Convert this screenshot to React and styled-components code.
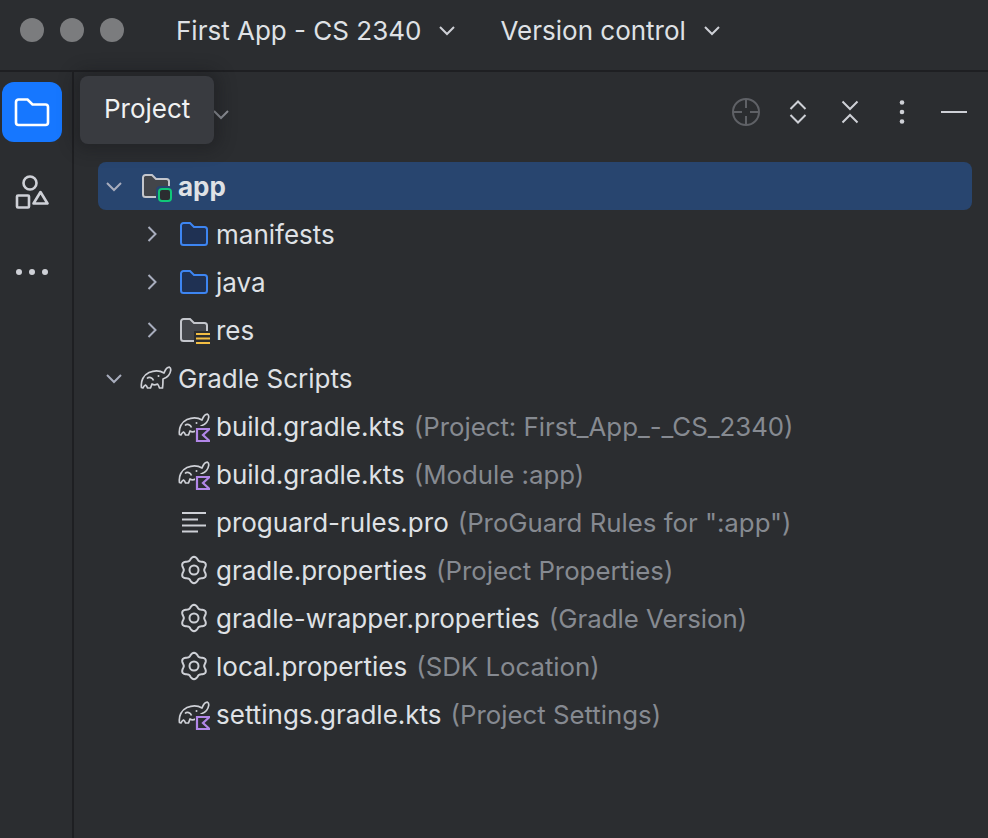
import React from 'react';
import styled, { createGlobalStyle } from 'styled-components';

const Global = createGlobalStyle`
  html, body { margin: 0; padding: 0; background: #2b2d30; }
  body { font-family: Inter, "Liberation Sans", sans-serif; }
`;

const Window = styled.div`
  width: 988px;
  height: 838px;
  display: flex;
  flex-direction: column;
  overflow: hidden;
  background: #2b2d30;
  color: #dfe1e5;
`;

const TitleBar = styled.header`
  height: 70px;
  flex: none;
  display: flex;
  align-items: center;
  padding: 0 0 10px 20px;
  box-sizing: border-box;
`;
const Lights = styled.div`
  display: flex;
  gap: 16px;
  margin-right: 52px;
`;
const Light = styled.span`
  width: 24px;
  height: 24px;
  border-radius: 50%;
  background: #7b7c7e;
`;
const Menu = styled.div`
  display: flex;
  align-items: center;
  gap: 15px;
  margin-right: 42px;
  font-size: 26px;
`;

const Body = styled.div`
  flex: 1;
  display: flex;
  border-top: 2px solid #1e1f22;
`;
const Strip = styled.nav`
  width: 74px;
  flex: none;
  display: flex;
  flex-direction: column;
  align-items: center;
  box-sizing: border-box;
  padding: 10px 8px 0 0;
  border-right: 2px solid #1e1f22;
`;
const StripButton = styled.div`
  width: 60px;
  height: 60px;
  margin-bottom: ${(p) => p.$gap}px;
  display: flex;
  align-items: center;
  justify-content: center;
  border-radius: 12px;
  background: ${(p) => (p.$active ? '#1677ff' : 'transparent')};
`;

const Panel = styled.main`
  flex: 1;
  position: relative;
  min-width: 0;
  padding: 0 16px 0 24px;
`;
const PanelHeader = styled.div`
  height: 90px;
  display: flex;
  align-items: center;
  padding-bottom: 10px;
  box-sizing: border-box;
`;
const HeaderChevron = styled.span`
  display: flex;
  margin-left: 112px;
  padding-top: 4px;
`;
const Tools = styled.div`
  margin-left: auto;
  display: flex;
  align-items: center;
  gap: 22px;
  padding-right: 3px;
`;
const Tool = styled.span`
  width: 30px;
  height: 30px;
  display: flex;
  align-items: center;
  justify-content: center;
`;
const Tooltip = styled.div`
  position: absolute;
  left: 6px;
  top: 4px;
  width: 134px;
  height: 68px;
  box-sizing: border-box;
  padding: 0 0 4px 24px;
  display: flex;
  align-items: center;
  font-size: 26px;
  color: #f0f1f2;
  background: #393b40;
  border-radius: 8px;
  box-shadow: 0 0 16px 6px rgba(20, 21, 23, 0.35);
`;

const Tree = styled.ul`
  list-style: none;
  margin: 0;
  padding: 0;
`;
const Row = styled.li`
  height: 48px;
  display: flex;
  align-items: center;
  padding-left: ${(p) => p.$indent}px;
  border-radius: 8px;
  font-size: 26px;
  white-space: pre;
  background: ${(p) => (p.$selected ? '#28456f' : 'transparent')};
`;
const Arrow = styled.span`
  width: 32px;
  height: 30px;
  flex: none;
  margin-right: 4px;
  display: flex;
  align-items: center;
  justify-content: center;
`;
const NodeIcon = styled.span`
  width: 32px;
  height: 32px;
  flex: none;
  margin: 0 6px;
  display: flex;
  align-items: center;
  justify-content: center;
`;
const Name = styled.span`
  font-weight: ${(p) => (p.$bold ? 700 : 400)};
  color: #dfe1e5;
`;
const Hint = styled.span`
  margin-left: 9px;
  font-size: 25.8px;
  color: #868a91;
`;

const Chevron = ({ dir = 'down', size = 22, color = '#a8adbd', w = 2 }) => {
  const d = dir === 'down' ? 'M4 8l7 7 7-7' : 'M7.5 4l7 7-7 7';
  return (
    <svg width={size} height={size} viewBox="0 0 22 22" fill="none" stroke={color} strokeWidth={w}>
      <path d={d} />
    </svg>
  );
};

const FolderNav = () => (
  <svg width="36" height="30" viewBox="0 0 36 30" fill="none" stroke="#fff" strokeWidth="2.6">
    <path d="M2 5a2.5 2.5 0 0 1 2.5-2.5h9l5 5h13A2.5 2.5 0 0 1 34 10v15.5a2.5 2.5 0 0 1-2.5 2.5h-27A2.5 2.5 0 0 1 2 25.5z" />
  </svg>
);

const Shapes = () => (
  <svg width="34" height="34" viewBox="0 0 34 34" fill="none" stroke="#ced0d6" strokeWidth="2.6">
    <circle cx="15" cy="8" r="6.5" />
    <rect x="2" y="20.5" width="12" height="12" rx="1" />
    <path d="M25.5 17l7 11.5h-14z" strokeLinejoin="round" />
  </svg>
);

const folderPath = 'M3 7.5A2.5 2.5 0 0 1 5.5 5H12l4 4h10.5A2.5 2.5 0 0 1 29 11.5v13a2.5 2.5 0 0 1-2.5 2.5h-21A2.5 2.5 0 0 1 3 24.5z';

const BlueFolder = () => (
  <svg width="32" height="32" viewBox="0 0 32 32" fill="#1f3153" stroke="#3d85f2" strokeWidth="2">
    <path d={folderPath} />
  </svg>
);

const GreyFolder = ({ children }) => (
  <svg width="32" height="32" viewBox="0 0 32 32" fill="#43454a">
    <path stroke="#c4c6cc" strokeWidth="2" d={folderPath} />
    {children}
  </svg>
);

const ModuleFolder = () => (
  <GreyFolder>
    <rect x="16" y="16" width="17" height="17" rx="4" fill="#28456f" />
    <rect x="19" y="19" width="12" height="12" rx="3" fill="#2b2d30" stroke="#10c878" strokeWidth="2" />
  </GreyFolder>
);

const ResFolder = () => (
  <GreyFolder>
    <rect x="16" y="17" width="17" height="15" fill="#2b2d30" />
    <path d="M18 20h14M18 24.5h14M18 29h14" stroke="#f2bd43" strokeWidth="2.2" />
  </GreyFolder>
);

const elephant =
  'M1.5 21.5C0.5 15 3.5 9 9 6.5C14 4.5 19 4 24 7C25 4.5 27 1 29.5 1.2C31.5 2 31 6.5 28.5 9.5C27 11.5 24.5 12.5 23 13C23 16 23 19 22.5 22H19.5C19 20.5 18.5 19 17.5 18C15.5 19 13.5 19 12 18L10.5 22H7.5C7 20.5 6.5 19.5 5.5 19C4.5 19.5 3.5 20.5 3 22z';

const Elephant = () => (
  <g fill="none" stroke="#ced0d6" strokeWidth="1.7" strokeLinejoin="round">
    <path d={elephant} />
    <path d="M7 12.5C9 10.500 12.500 11.500 13.500 14.500" />
    <circle cx="18.5" cy="10" r="1" fill="#ced0d6" stroke="none" />
  </g>
);

const Gradle = () => (
  <svg width="32" height="24" viewBox="0 0 32 24">
    <Elephant />
  </svg>
);

const GradleKotlin = () => (
  <svg width="32" height="32" viewBox="0 0 32 32" fill="none">
    <g transform="translate(0 3)">
      <Elephant />
    </g>
    <rect x="17" y="16" width="15" height="16" fill="#2b2d30" />
    <path d="M19 19H31.5L25 25L31.5 31H19z" stroke="#b287e8" strokeWidth="2.2" />
  </svg>
);

const Lines = () => (
  <svg width="26" height="22" viewBox="0 0 26 22" stroke="#ced0d6" strokeWidth="2">
    <path d="M1 2h24M1 8.5h16M1 14.5h24M1 20.5h16" />
  </svg>
);

// six rounded lobes around the centre, one pointing up
const gearPoints = Array.from({ length: 96 }, (_, i) => {
  const a = (i / 96) * Math.PI * 2;
  const r = 11.7 + 1.5 * Math.cos(6 * a);
  return `${(15 + r * Math.sin(a)).toFixed(2)},${(15 - r * Math.cos(a)).toFixed(2)}`;
}).join(' ');

const Gear = () => (
  <svg width="30" height="30" viewBox="0 0 30 30" fill="none" stroke="#ced0d6" strokeWidth="2">
    <circle cx="15" cy="15" r="4.5" />
    <polygon points={gearPoints} strokeLinejoin="round" />
  </svg>
);

const Locate = () => (
  <svg width="30" height="30" viewBox="0 0 30 30" fill="none" stroke="#5f6166" strokeWidth="2">
    <circle cx="15" cy="15" r="13" />
    <path d="M15 2v9M15 19v9M2 15h9M19 15h9" />
  </svg>
);
const Expand = () => (
  <svg width="18" height="24" viewBox="0 0 18 24" fill="none" stroke="#ced0d6" strokeWidth="2">
    <path d="M1.5 9L9 1.5 16.5 9M1.5 15L9 22.5 16.5 15" />
  </svg>
);
const Collapse = () => (
  <svg width="18" height="24" viewBox="0 0 18 24" fill="none" stroke="#ced0d6" strokeWidth="2">
    <path d="M1.5 1.5L9 9l7.5-7.5M1.5 22.5L9 15l7.5 7.5" />
  </svg>
);
const KebabV = () => (
  <svg width="24" height="24" viewBox="0 0 24 24" fill="#ced0d6">
    <circle cx="12" cy="2.5" r="2.3" />
    <circle cx="12" cy="12" r="2.3" />
    <circle cx="12" cy="21.5" r="2.3" />
  </svg>
);
const KebabH = () => (
  <svg width="34" height="8" viewBox="0 0 34 8" fill="#ced0d6">
    <circle cx="4" cy="4" r="3" />
    <circle cx="17" cy="4" r="3" />
    <circle cx="30" cy="4" r="3" />
  </svg>
);
const Minimize = () => (
  <svg width="26" height="4" viewBox="0 0 26 4" stroke="#ced0d6" strokeWidth="2">
    <path d="M0 2h26" />
  </svg>
);

const rows = [
  { name: 'app', bold: true, icon: <ModuleFolder />, open: true, indent: 0, selected: true },
  { name: 'manifests', icon: <BlueFolder />, open: false, indent: 38 },
  { name: 'java', icon: <BlueFolder />, open: false, indent: 38 },
  { name: 'res', icon: <ResFolder />, open: false, indent: 38 },
  { name: 'Gradle Scripts', icon: <Gradle />, open: true, indent: 0 },
  { name: 'build.gradle.kts', hint: '(Project: First_App_-_CS_2340)', icon: <GradleKotlin />, indent: 74 },
  { name: 'build.gradle.kts', hint: '(Module :app)', icon: <GradleKotlin />, indent: 74 },
  { name: 'proguard-rules.pro', hint: '(ProGuard Rules for ":app")', icon: <Lines />, indent: 74 },
  { name: 'gradle.properties', hint: '(Project Properties)', icon: <Gear />, indent: 74 },
  { name: 'gradle-wrapper.properties', hint: '(Gradle Version)', icon: <Gear />, indent: 74 },
  { name: 'local.properties', hint: '(SDK Location)', icon: <Gear />, indent: 74 },
  { name: 'settings.gradle.kts', hint: '(Project Settings)', icon: <GradleKotlin />, indent: 74 },
];

export default function App() {
  return (
    <Window>
      <Global />
      <TitleBar>
        <Lights>
          <Light />
          <Light />
          <Light />
        </Lights>
        <Menu>
          First App - CS 2340
          <Chevron color="#ced0d6" />
        </Menu>
        <Menu>
          Version control
          <Chevron color="#ced0d6" />
        </Menu>
      </TitleBar>
      <Body>
        <Strip>
          <StripButton $active $gap={20}>
            <FolderNav />
          </StripButton>
          <StripButton $gap={20}>
            <Shapes />
          </StripButton>
          <StripButton $gap={0}>
            <KebabH />
          </StripButton>
        </Strip>
        <Panel>
          <Tooltip>Project</Tooltip>
          <PanelHeader>
            <HeaderChevron>
              <Chevron color="#8d9097" />
            </HeaderChevron>
            <Tools>
              <Tool>
                <Locate />
              </Tool>
              <Tool>
                <Expand />
              </Tool>
              <Tool>
                <Collapse />
              </Tool>
              <Tool>
                <KebabV />
              </Tool>
              <Tool>
                <Minimize />
              </Tool>
            </Tools>
          </PanelHeader>
          <Tree>
            {rows.map((r, i) => (
              <Row key={i} $indent={r.indent} $selected={r.selected}>
                {r.open !== undefined && (
                  <Arrow>
                    <Chevron dir={r.open ? 'down' : 'right'} />
                  </Arrow>
                )}
                <NodeIcon>{r.icon}</NodeIcon>
                <Name $bold={r.bold}>{r.name}</Name>
                {r.hint && <Hint>{r.hint}</Hint>}
              </Row>
            ))}
          </Tree>
        </Panel>
      </Body>
    </Window>
  );
}
